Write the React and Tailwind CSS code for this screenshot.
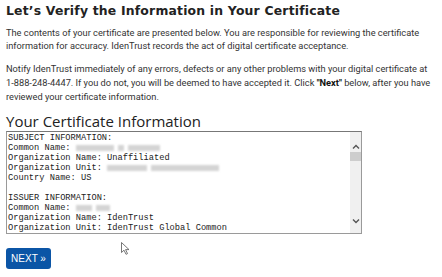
import React from 'react';

const mono = { fontFamily: '"Liberation Mono", "Courier New", monospace' };

function Blur({ w }) {
    return <span className="inline-block h-[6px] align-middle bg-[#d4d4d4] blur-[1px] mr-[4px]" style={{ width: w }} />;
}

export default function App() {
    return (
        <div className="relative w-[442px] h-[277px] overflow-hidden bg-white pl-[6px] pt-[1px] text-[#333]">
            <h1 className="text-[12.4px] leading-[20px] font-bold text-[#222] tracking-[0.2px] whitespace-nowrap" style={{ fontFamily: '"DejaVu Sans", sans-serif' }}>
                Let’s Verify the Information in Your Certificate
            </h1>
            <div className="w-[428px] text-[9.25px] mt-[5px]" style={{ fontFamily: 'Roboto, sans-serif' }}>
                <p className="leading-[13px]">The contents of your certificate are presented below. You are responsible for reviewing the certificate information for accuracy. IdenTrust records the act of digital certificate acceptance.</p>
                <p className="mt-[10px] leading-[14px]">
                    Notify IdenTrust immediately of any errors, defects or any other problems with your digital certificate at <span className="whitespace-nowrap">1-888-248-4447.</span> If you do not, you will be deemed to have accepted it. Click <b className="text-[#111]">"Next"</b> below, after you have reviewed your certificate information.
                </p>
            </div>
            <h2 className="mt-[9px] text-[15px] leading-[16px] text-[#222]" style={{ fontFamily: '"Open Sans", sans-serif' }}>Your Certificate Information</h2>
            <div className="mt-[2px] w-[356px] h-[103px] border border-[#9a9a9a] border-t-[#777] flex">
                <div className="flex-1 pl-[1px] pt-[1px] text-[8.7px] leading-[10px] text-[#222] whitespace-pre overflow-hidden" style={mono}>
                    <div>SUBJECT INFORMATION:</div>
                    <div>Common Name: <Blur w={38} /><Blur w={6} /><Blur w={32} /></div>
                    <div>Organization Name: Unaffiliated</div>
                    <div>Organization Unit: <Blur w={40} /><Blur w={68} /></div>
                    <div>Country Name: US</div>
                    <div>&nbsp;</div>
                    <div>ISSUER INFORMATION:</div>
                    <div>Common Name: <Blur w={16} /><Blur w={14} /></div>
                    <div>Organization Name: IdenTrust</div>
                    <div>Organization Unit: IdenTrust Global Common</div>
                </div>
                <div className="w-[11px] bg-[#f0f0f0] flex flex-col items-center">
                    <svg width="8" height="6" viewBox="0 0 8 6" className="mt-[12px]">
                        <path d="M1 4.5 L4 1.5 L7 4.5" stroke="#555" strokeWidth="1.4" fill="none" />
                    </svg>
                    <div className="w-[11px] h-[9px] bg-[#cdcdcd] mt-[2px]" />
                    <div className="flex-1" />
                    <svg width="8" height="6" viewBox="0 0 8 6" className="mb-[9px]">
                        <path d="M1 1.5 L4 4.5 L7 1.5" stroke="#555" strokeWidth="1.4" fill="none" />
                    </svg>
                </div>
            </div>
            <button className="mt-[14px] w-[45px] h-[21px] rounded-[3px] bg-[#0b55a6] text-white text-[10px] leading-[21px] text-center" style={{ fontFamily: '"Liberation Sans", Arial, sans-serif' }}>
                NEXT »
            </button>
            <svg className="absolute left-[121px] top-[242px]" width="9" height="13" viewBox="0 0 9 13">
                <path d="M0.5 0.5 L0.5 10.5 L3 8.2 L5 12.3 L6.5 11.6 L4.6 7.6 L8 7.6 Z" fill="#fff" stroke="#555" strokeWidth="0.8" />
            </svg>
        </div>
    );
}
